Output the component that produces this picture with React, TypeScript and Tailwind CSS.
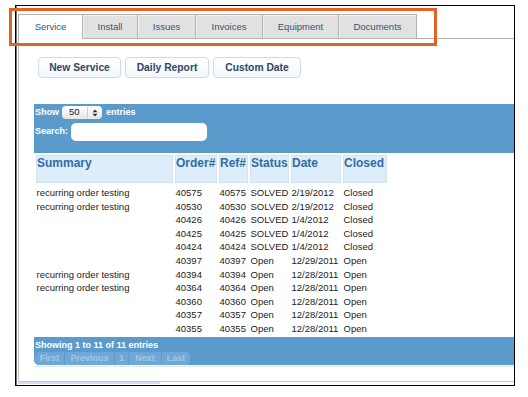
import React from 'react';

const tabs = [
  { label: 'Service', w: 'w-[65px]', active: true },
  { label: 'Install', w: 'w-[55px]' },
  { label: 'Issues', w: 'w-[58px]' },
  { label: 'Invoices', w: 'w-[67px]' },
  { label: 'Equipment', w: 'w-[76px]' },
  { label: 'Documents', w: 'w-[78px]' },
];

const rows = [
  ['recurring order testing', '40575', '40575', 'SOLVED', '2/19/2012', 'Closed'],
  ['recurring order testing', '40530', '40530', 'SOLVED', '2/19/2012', 'Closed'],
  ['', '40426', '40426', 'SOLVED', '1/4/2012', 'Closed'],
  ['', '40425', '40425', 'SOLVED', '1/4/2012', 'Closed'],
  ['', '40424', '40424', 'SOLVED', '1/4/2012', 'Closed'],
  ['', '40397', '40397', 'Open', '12/29/2011', 'Open'],
  ['recurring order testing', '40394', '40394', 'Open', '12/28/2011', 'Open'],
  ['recurring order testing', '40364', '40364', 'Open', '12/28/2011', 'Open'],
  ['', '40360', '40360', 'Open', '12/28/2011', 'Open'],
  ['', '40357', '40357', 'Open', '12/28/2011', 'Open'],
  ['', '40355', '40355', 'Open', '12/28/2011', 'Open'],
];

const cols = 'grid grid-cols-[137px_42px_29px_39px_50px_44px] gap-x-[2px]';

export default function App() {
  return (
    <div className="relative w-[528px] h-[397px] bg-white overflow-hidden font-['Liberation_Sans',Arial,sans-serif]">
      {/* frame */}
      <div className="ml-[15px] mt-[5px] w-[500px] h-[381px] border border-black shadow-[inset_1px_0_0_#777] flex flex-col overflow-hidden">
        {/* tabs */}
        <div className="flex pl-[2px] pt-[8px] border-b border-[#b3b3b3]">
          {tabs.map((t) =>
            t.active ? (
              <div
                key={t.label}
                className={`${t.w} h-[25px] -mb-px bg-white border-x border-t border-[#b3b3b3] flex items-center justify-center text-[9.5px] text-[#34557a]`}
              >
                {t.label}
              </div>
            ) : (
              <div
                key={t.label}
                className={`${t.w} h-[24px] bg-[#e1e1e1] border-t border-r border-[#b3b3b3] shadow-[inset_1px_1px_0_#f0f0f0] flex items-center justify-center text-[9.5px] text-[#34557a] pt-[1px]`}
              >
                {t.label}
              </div>
            )
          )}
        </div>

        {/* content */}
        <div className="ml-[2px] h-[343px] border-l border-b border-[#c4c4c4] flex flex-col">
          <div className="flex gap-[4px] ml-[19px] mt-[18px]">
            {['New Service', 'Daily Report', 'Custom Date'].map((b, i) => (
              <div
                key={b}
                className={`${['w-[83px]', 'w-[84px]', 'w-[88px]'][i]} h-[21px] rounded-[4px] border border-[#c9dcee] bg-gradient-to-b from-white to-[#f3f7fb] flex items-center justify-center text-[10.3px] font-bold text-[#2c4766]`}
              >
                {b}
              </div>
            ))}
          </div>

          {/* blue filter panel */}
          <div className="ml-[15px] mt-[26px] h-[49px] bg-[#5b9bcb] pl-[1px] pt-[2px] text-white text-[9px] font-bold">
            <div className="flex items-center h-[13px]">
              <span>Show</span>
              <div className="ml-[3px] w-[40px] h-[13px] rounded-[4px] bg-gradient-to-b from-white to-[#e6e6e6] flex items-center text-[#222] font-normal text-[9.5px]">
                <span className="ml-[7px] flex-1">50</span>
                <span className="w-px h-[11px] bg-[#cfcfcf]" />
                <svg width="10" height="10" viewBox="0 0 10 10" className="mx-[2px]">
                  <path d="M5 1.5 L7.5 4.2 L2.5 4.2 Z" fill="#333" />
                  <path d="M5 8.5 L7.5 5.8 L2.5 5.8 Z" fill="#333" />
                </svg>
              </div>
              <span className="ml-[4px]">entries</span>
            </div>
            <div className="flex items-center mt-[4px] h-[18px]">
              <span>Search:</span>
              <div className="ml-[3px] w-[136px] h-[18px] rounded-[5px] bg-white" />
            </div>
          </div>

          {/* table */}
          <div className="ml-[17px] mt-[2px]">
            <div className={`${cols} h-[28px]`}>
              {['Summary', 'Order#', 'Ref#', 'Status', 'Date', 'Closed'].map((h) => (
                <div
                  key={h}
                  className="bg-[#ddedfa] border border-[#d2e4f3] text-[12px] font-bold leading-[14px] text-[#2f6ea5] whitespace-nowrap"
                >
                  {h}
                </div>
              ))}
            </div>
            <div className="pt-[3px]">
              {rows.map((r, i) => (
                <div key={i} className={`${cols} h-[13.6px] text-[9.5px] leading-[13.6px] text-[#222] whitespace-nowrap`}>
                  {r.map((c, j) => (
                    <div key={j} className="pl-[0.5px]">
                      {c}
                    </div>
                  ))}
                </div>
              ))}
            </div>
          </div>

          {/* footer */}
          <div className="ml-[15px] mt-[1.4px] h-[28px] bg-[#5b9bcb] rounded-bl-[5px] pl-[1px] pt-[2px] text-[9px] font-bold">
            <div className="text-white leading-[12px]">Showing 1 to 11 of 11 entries</div>
            <div className="mt-[1px] flex h-[13px] w-fit rounded-[4px] bg-[#6ea8d7] text-[#a3c7e6] leading-[13px] overflow-hidden">
              <span className="w-[30px] text-center border-r border-[#5d9acb]">First</span>
              <span className="w-[50px] text-center border-r border-[#5d9acb]">Previous</span>
              <span className="w-[14px] text-center border-r border-[#5d9acb]">1</span>
              <span className="w-[33px] text-center border-r border-[#5d9acb]">Next</span>
              <span className="w-[28px] text-center">Last</span>
            </div>
          </div>
          <div className="ml-[15px] mt-[1px] h-px bg-[#dce9f5]" />
        </div>
        <div className="ml-[2px] w-[142px] h-[2px] bg-[#cfe0f0]" />
      </div>

      {/* orange annotation box */}
      <div className="absolute left-[9px] top-[8px] w-[428px] h-[38px] border-[3px] border-[#e06423]" />
    </div>
  );
}
